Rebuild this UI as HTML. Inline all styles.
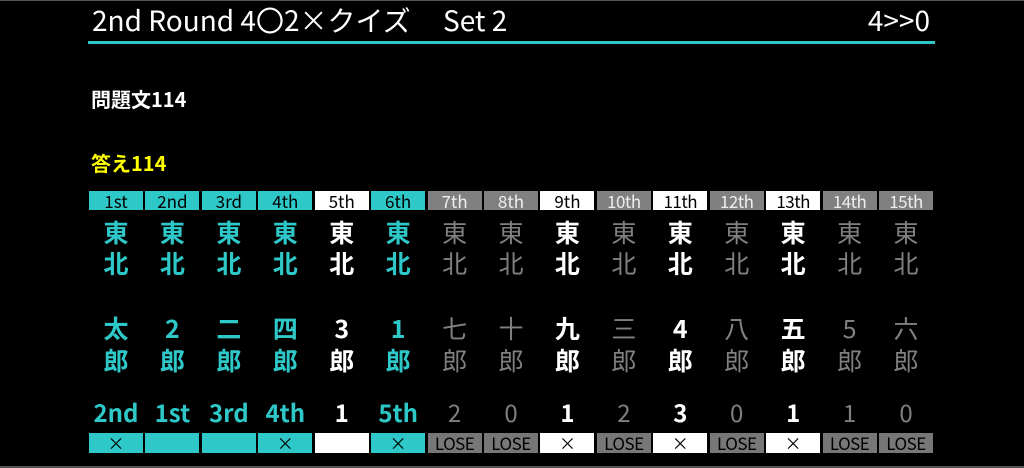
<!DOCTYPE html>
<html><head><meta charset="utf-8"><style>
*{margin:0;padding:0;box-sizing:border-box}
body{width:1024px;height:468px;background:#000;position:relative;overflow:hidden;font-family:"Liberation Sans","Noto Sans CJK JP",sans-serif;color:#fff}
.a{position:absolute}
.t{font-family:"Noto Sans CJK JP",sans-serif}
.col{position:absolute;top:0;width:54px;text-align:center}
.h{position:absolute;top:191px;left:0;width:54px;height:19px;font-size:17px;line-height:19px;font-family:"Noto Sans CJK JP",sans-serif;overflow:hidden}
.c{position:absolute;left:0;width:54px;font-size:25px;line-height:28px;font-family:"Noto Sans CJK JP",sans-serif}
.r{position:absolute;left:0;width:54px;top:398px;font-size:24px;line-height:28px;font-family:"Noto Sans CJK JP",sans-serif}
.b{position:absolute;left:0;top:433px;width:54px;height:20px;font-size:17px;line-height:20px;font-family:"Noto Sans CJK JP",sans-serif;color:#000;overflow:hidden;white-space:nowrap}
</style></head><body>
<div class="a" style="left:0;top:0;width:1024px;height:1px;background:#555"></div>
<div class="a t" style="left:92px;top:2px;font-size:28px;line-height:36px;white-space:pre">2nd Round 4〇2×クイズ</div>
<div class="a t" style="left:443px;top:2px;font-size:28px;line-height:36px;white-space:pre">Set 2</div>
<div class="a t" style="right:94px;top:2px;font-size:28px;line-height:36px">4&gt;&gt;0</div>
<div class="a" style="left:88px;top:41px;width:847px;height:3px;background:#2ec8c8"></div>
<div class="a t" style="left:91px;top:86px;font-size:20px;line-height:26px;font-weight:bold">問題文114</div>
<div class="a t" style="left:91px;top:150px;font-size:20px;line-height:26px;font-weight:bold;color:#ffff00">答え114</div>
<div class="a" style="left:0;top:466px;width:1024px;height:2px;background:#555"></div>
<div id="cols"></div>
<script>
var d=[["1st","t","太","2nd","×"],["2nd","t","2","1st",""],["3rd","t","二","3rd",""],["4th","t","四","4th","×"],["5th","w","3","1",""],["6th","t","1","5th","×"],["7th","g","七","2","L"],["8th","g","十","0","L"],["9th","w","九","1","×"],["10th","g","三","2","L"],["11th","w","4","3","×"],["12th","g","八","0","L"],["13th","w","五","1","×"],["14th","g","5","1","L"],["15th","g","六","0","L"]];
var h="";
d.forEach(function(x,i){
var l=89+i*56.43;
var hb=x[1]=="t"?"#2ec8c8":x[1]=="w"?"#fff":"#808080";
var hc=x[1]=="g"?"#eee":"#000";
var tc=x[1]=="t"?"#2ec8c8":x[1]=="w"?"#fff":"#808080";
var fw=x[1]=="g"?"400":"bold";
var bb=x[1]=="t"?"#2ec8c8":x[1]=="w"?"#fff":"#777";
var bt=x[4]=="L"?"LOSE":x[4];
h+='<div class="col" style="left:'+l+'px">'+
'<div class="h" style="background:'+hb+';color:'+hc+';letter-spacing:'+(x[0].length>3?"-0.5px":"0")+'">'+x[0]+'</div>'+
'<div class="c" style="top:218px;color:'+tc+';font-weight:'+fw+'">東</div>'+
'<div class="c" style="top:249px;color:'+tc+';font-weight:'+fw+'">北</div>'+
'<div class="c" style="top:314px;color:'+tc+';font-weight:'+fw+'">'+x[2]+'</div>'+
'<div class="c" style="top:346px;color:'+tc+';font-weight:'+fw+'">郎</div>'+
'<div class="r" style="color:'+tc+';font-weight:'+fw+'">'+x[3]+'</div>'+
'<div class="b" style="background:'+bb+';letter-spacing:'+(x[4]=="L"?"-0.5px":"0")+'">'+bt+'</div>'+
'</div>';});
document.getElementById("cols").innerHTML=h;
</script>
</body></html>
